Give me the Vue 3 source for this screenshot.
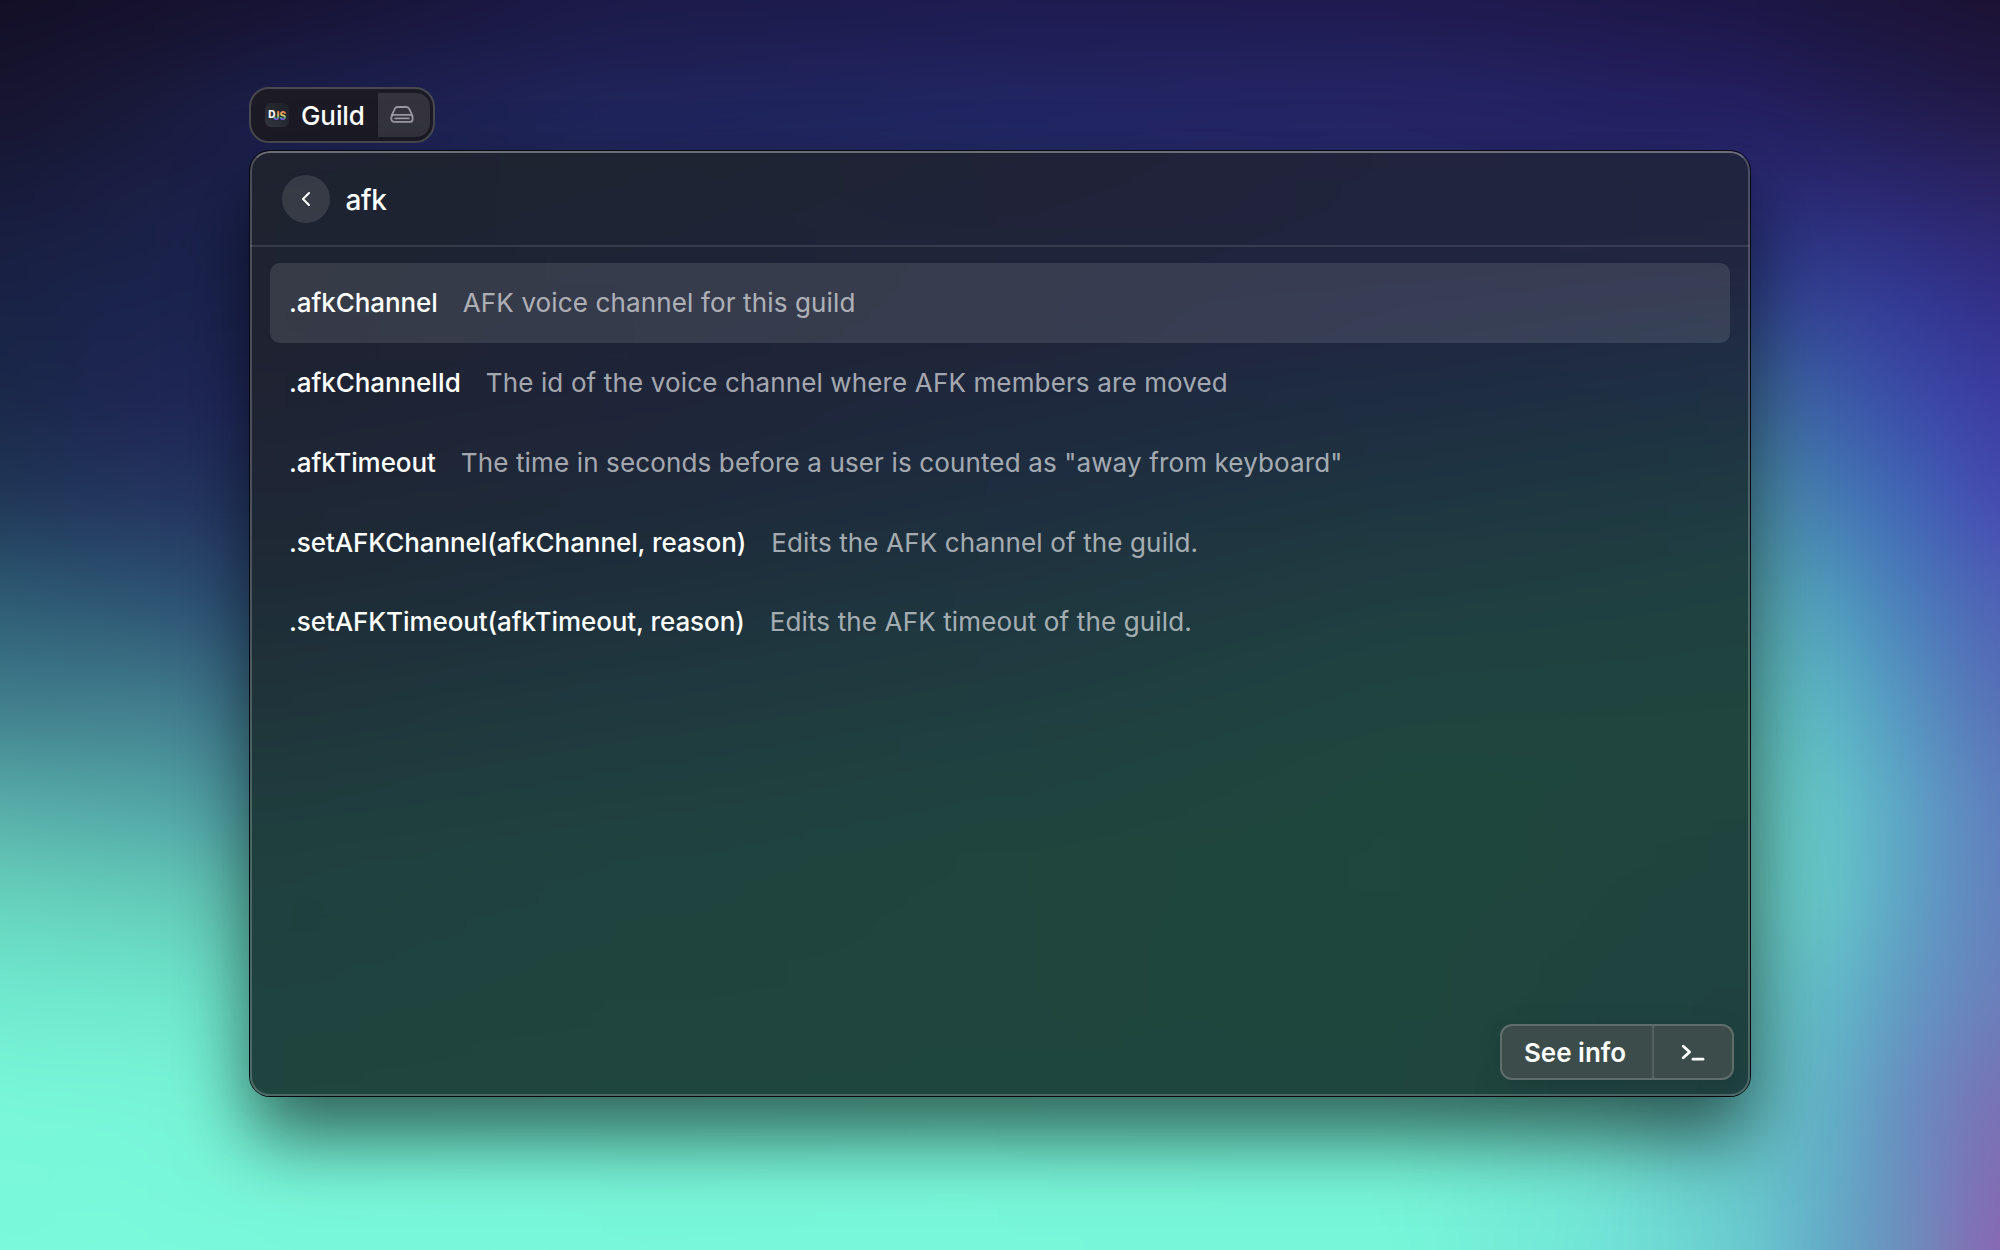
<script setup>
const rows = [
  { name: '.afkChannel', description: 'AFK voice channel for this guild' },
  { name: '.afkChannelId', description: 'The id of the voice channel where AFK members are moved' },
  { name: '.afkTimeout', description: 'The time in seconds before a user is counted as "away from keyboard"' },
  { name: '.setAFKChannel(afkChannel, reason)', description: 'Edits the AFK channel of the guild.' },
  { name: '.setAFKTimeout(afkTimeout, reason)', description: 'Edits the AFK timeout of the guild.' },
]

// Mesh gradients: every column is a vertical ramp, cross-faded into the previous one.
const wallpaper = {
  y: [0, 100, 200, 300, 400, 500, 600, 700, 800, 900, 1000, 1100, 1250],
  columns: [
    [0, '#130f26 #17142f #171c3c #192346 #1a2849 #203757 #2e5c75 #3f7c8b #57aaa7 #67d3bd #70ead0 #79f7d8 #7bfadb'],
    [150, '#16112c #191a3b #1b2046 #1b244d #1f2654 #24355f #2d5472 #417c8c #51a3a4 #64ccb9 #6fe8cd #78f5d8 #7bf9dc'],
    [260, '#171232 #1b1e48 #1c2250 #1c2553 #20295d #243663 #2d4f78 #3d738c #509da6 #63c8b8 #6fe6cd #77f3d7 #7af8db'],
    [600, '#1c1a48 #1f245a #20285f #212d66 #253a6e #30527e #3f748e #50989b #60bbae #6cdcc5 #74edd2 #77f4d8 #79f7da'],
    [1000, '#1e1b50 #212662 #232b68 #273370 #2e4680 #3b6590 #4a899c #5aada9 #68ccb9 #70e2cb #76efd4 #78f5d8 #79f7da'],
    [1400, '#1f1a4f #252565 #27296c #2a3378 #345088 #42789a #53a0a8 #62beb4 #6bd6c3 #72e6ce #76efd5 #77f4d8 #77f6d9'],
    [1600, '#1e1849 #242162 #28286e #2f3a85 #3a5e98 #488ba6 #57acb0 #63c4ba #6cd3c3 #72dccb #74e0ce #74e6d3 #72e4d6'],
    [1750, '#1c1646 #241f5f #2a2c78 #304892 #40719f #4c94ac #5bafb6 #61c2bd #68cabf #69ccc0 #66c6c0 #66c4c5 #69c9cf'],
    [1830, '#1b153e #221d56 #2b2b76 #344194 #3c5da8 #457bb3 #509cbd #5cb4c5 #64c4c8 #66c6c9 #62b9c9 #62b1c7 #64a9c7'],
    [1900, '#1c143a #211c4e #2b2872 #333a95 #3b4da8 #4168b6 #4b80ba #5596c1 #5da6c6 #5ea5c5 #619bc2 #678fc0 #6b90be'],
    [2000, '#1b1233 #211946 #2c2668 #322f88 #3c3ca0 #4549b0 #4f60b5 #586fb6 #5f7cbd #637fbd #6b7dbb #7a70b5 #8a66b0'],
  ],
}
const glass = {
  y: [0, 94, 200, 300, 400, 500, 600, 700, 945],
  columns: [
    [0, '#1f222f #1f2431 #1f2231 #1f2535 #1e2935 #1f3039 #1f383c #1f403f #1f453f'],
    [400, '#1f2532 #1e2435 #1f2438 #1e2739 #1e2d3b #1f353e #1f3d40 #1f433f #1f463e'],
    [750, '#202336 #20243a #1f263a #1e2b3f #1f323f #1f3a40 #1f4140 #1f453e #1f463e'],
    [1150, '#21243c #20243d #1f2942 #1e3141 #1f3a41 #1f4241 #1f463e #1f473d #1f463e'],
    [1500, '#21243f #22253e #1f2d45 #1f3642 #1f3f42 #1f433f #1f463e #1f443f #1f4141'],
  ],
}

// Layers reach past the frame by this much, so that smoothing never touches its edges.
const bleed = 80

function layers(mesh) {
  return mesh.columns.map(([x, colors], i) => {
    const ramp = colors.split(' ').map((c, k) => `${c} ${mesh.y[k] + bleed}px`).join(', ')
    const style = { background: `linear-gradient(180deg, ${ramp})` }
    if (i > 0) {
      const from = mesh.columns[i - 1][0]
      style.maskImage = `linear-gradient(90deg, transparent ${from + bleed}px, #000 ${x + bleed}px)`
    }
    return style
  })
}
const wallpaperLayers = layers(wallpaper)
const glassLayers = layers(glass)
</script>

<template>
  <main class="desktop">
    <div class="mesh">
      <div class="mesh-canvas">
        <div v-for="(style, i) in wallpaperLayers" :key="i" class="mesh-layer" :style="style"></div>
      </div>
    </div>

    <div class="chip">
      <svg class="chip-logo" viewBox="0 0 24 24">
        <defs>
          <linearGradient id="tile" x1="0" y1="1" x2="1" y2="0">
            <stop offset="0" stop-color="#34373e" />
            <stop offset="1" stop-color="#1c1e25" />
          </linearGradient>
          <linearGradient id="rainbow" gradientUnits="userSpaceOnUse" x1="0" y1="7" x2="0" y2="18">
            <stop offset="0" stop-color="#f0605c" />
            <stop offset="0.3" stop-color="#f3a45a" />
            <stop offset="0.5" stop-color="#d8d36a" />
            <stop offset="0.68" stop-color="#57b88a" />
            <stop offset="0.85" stop-color="#7a4ff0" />
          </linearGradient>
        </defs>
        <rect width="24" height="24" rx="6" fill="url(#tile)" />
        <text x="3.2" y="15" class="logo-d">D</text>
        <text x="8.6" y="17.2" class="logo-js" textLength="12.6" lengthAdjust="spacingAndGlyphs">JS</text>
      </svg>
      <span class="chip-label">Guild</span>
      <span class="chip-drive">
        <svg width="24" height="20" viewBox="0 0 24 20" fill="none" stroke="#9a99a3" stroke-width="1.8" stroke-linecap="round" stroke-linejoin="round">
          <path d="M1.6 10.6 4.9 3.7Q5.8 2 7.7 2h8.6q1.9 0 2.8 1.7l3.3 6.9" />
          <rect x="1.3" y="9.9" width="21.4" height="7" rx="3" />
          <path d="M5.2 13.4h13.6" />
        </svg>
      </span>
    </div>

    <section class="panel">
      <div class="mesh panel-mesh">
        <div class="mesh-canvas">
          <div v-for="(style, i) in glassLayers" :key="i" class="mesh-layer" :style="style"></div>
        </div>
      </div>
      <header class="search">
        <button class="back" aria-label="Back">
          <svg width="12" height="16" viewBox="0 0 12 16" fill="none" stroke="#fff" stroke-width="2" stroke-linecap="round" stroke-linejoin="round">
            <path d="M9 2 3 8l6 6" />
          </svg>
        </button>
        <span class="query">afk</span>
      </header>
      <ul class="results">
        <li v-for="(row, i) in rows" :key="row.name" class="row" :class="{ selected: i === 0 }">
          <span class="name">{{ row.name }}</span>
          <span class="description">{{ row.description }}</span>
        </li>
      </ul>
      <footer class="actions">
        <div class="action-group">
          <button class="action">See info</button>
          <button class="action terminal" aria-label="Open actions">
            <svg width="24" height="20" viewBox="0 0 24 20" fill="none" stroke="#fff" stroke-width="2.8" stroke-linecap="round" stroke-linejoin="round">
              <path d="M2.3 3.2 8.6 9 2.3 14.8" />
              <path d="M12 16.2h10" />
            </svg>
          </button>
        </div>
      </footer>
    </section>
  </main>
</template>

<style>
body {
  margin: 0;
  overflow: hidden;
}
</style>

<style scoped>
.desktop {
  position: relative;
  box-sizing: border-box;
  width: 2000px;
  height: 1250px;
  padding: 87px 250px 0;
  overflow: hidden;
  font-family: Inter, sans-serif;
  color: #fff;
}
.mesh {
  position: absolute;
  inset: 0;
  overflow: hidden;
}
.mesh-canvas {
  position: absolute;
  inset: -80px;
  filter: blur(24px);
}
.mesh-layer {
  position: absolute;
  inset: 0;
}
.chip {
  position: relative;
  display: flex;
  align-items: center;
  box-sizing: border-box;
  width: 186px;
  height: 56px;
  margin-left: -1px;
  padding: 0 3px 0 14px;
  border: 2px solid #48484f;
  border-radius: 20px;
  background: #1b1a25;
}
.chip-logo {
  width: 24px;
  height: 24px;
}
.logo-d,
.logo-js {
  font-family: Inter, sans-serif;
  font-size: 10px;
  font-weight: 800;
}
.logo-d {
  fill: #fff;
}
.logo-js {
  font-size: 12px;
  fill: url(#rainbow);
}
.chip-label {
  margin-left: 12px;
  font-size: 26px;
  font-weight: 500;
  letter-spacing: -0.1px;
}
.chip-drive {
  display: flex;
  align-items: center;
  justify-content: center;
  box-sizing: border-box;
  width: 52px;
  height: 44px;
  margin-left: auto;
  padding-right: 5px;
  border-radius: 0 14px 14px 0;
  background: #34333e;
}
.panel {
  position: relative;
  display: flex;
  flex-direction: column;
  box-sizing: border-box;
  width: 1500px;
  height: 945px;
  margin-top: 8px;
  border-radius: 20px;
  box-shadow: 0 0 0 1px #08090d, 0 40px 76px rgba(0, 0, 0, 0.6);
}
.panel-mesh {
  border-radius: 20px;
}
.panel-mesh::after {
  content: '';
  position: absolute;
  inset: 0;
  border: 2px solid rgba(255, 255, 255, 0.2);
  border-top-color: rgba(255, 255, 255, 0.34);
  border-radius: 20px;
}
.search {
  position: relative;
  display: flex;
  align-items: center;
  box-sizing: border-box;
  height: 96px;
  padding: 2px 31.5px 0;
  border-bottom: 2px solid rgba(255, 255, 255, 0.11);
}
button {
  padding: 0;
  border: 0;
  background: none;
  font: inherit;
  color: inherit;
}
.back {
  display: flex;
  align-items: center;
  justify-content: center;
  width: 48px;
  height: 48px;
  border-radius: 50%;
  background: rgba(255, 255, 255, 0.11);
}
.query {
  margin-left: 16px;
  padding-top: 1px;
  font-size: 28px;
  font-weight: 450;
  letter-spacing: -0.4px;
}
.results {
  position: relative;
  flex: 1;
  margin: 0;
  padding: 16px 20px;
  list-style: none;
}
.row {
  display: flex;
  align-items: center;
  box-sizing: border-box;
  height: 79.75px;
  padding: 0 19px;
  border-radius: 10px;
  font-size: 26px;
  white-space: pre;
}
.selected {
  background: rgba(255, 255, 255, 0.11);
}
.name {
  font-weight: 500;
  letter-spacing: -0.08px;
}
.description {
  margin-left: 25px;
  letter-spacing: 0.14px;
  color: rgba(255, 255, 255, 0.62);
}
.actions {
  position: relative;
  display: flex;
  justify-content: flex-end;
  padding: 0 16px 16px;
}
.action-group {
  display: flex;
  box-sizing: border-box;
  width: 234px;
  height: 56px;
  border: 2px solid #5f6e6c;
  border-radius: 12px;
  background: #3c4c4a;
  box-shadow: 0 4px 24px rgba(0, 0, 0, 0.12);
}
.action {
  flex: 1;
  padding-right: 4px;
  font-size: 26px;
  font-weight: 600;
}
.terminal {
  display: flex;
  flex: none;
  align-items: center;
  justify-content: center;
  width: 80px;
  padding: 1px 0 0;
  border-left: 2px solid #54625f;
}
</style>
